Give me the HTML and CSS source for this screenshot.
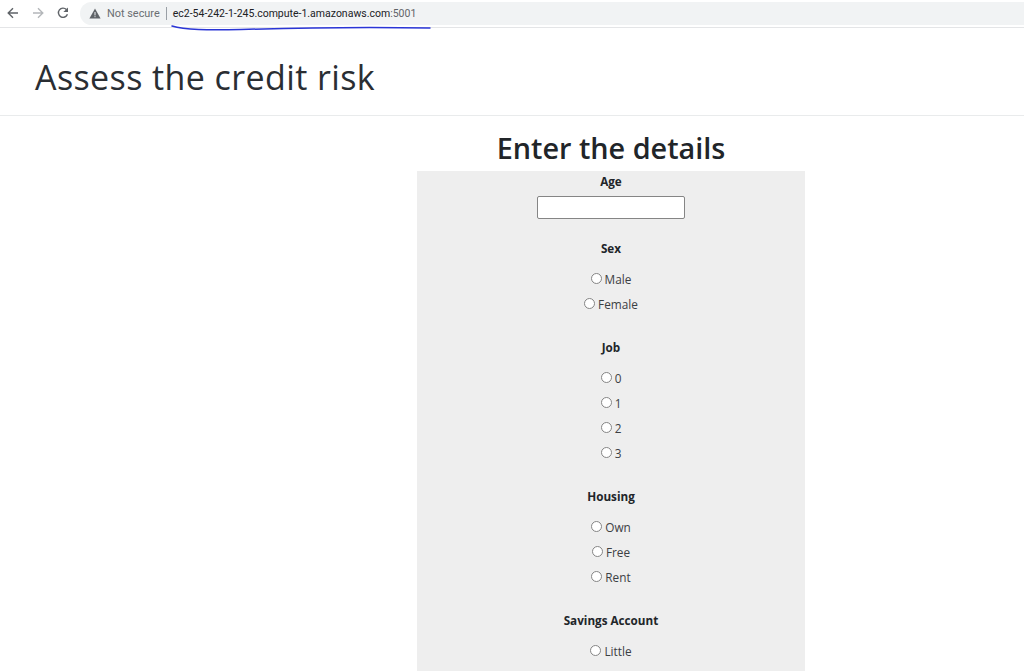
FILE: index.html
```html
<!DOCTYPE html>
<html lang="en">
<head>
<meta charset="utf-8">
<title>Assess the credit risk</title>
<link rel="stylesheet" href="styles.css">
</head>
<body>
<div class="toolbar">
  <svg class="nav" width="14" height="14" viewBox="0 0 14 14"><path d="M12 7H2.5M7 2.2 2.2 7 7 11.8" fill="none" stroke="#5f6368" stroke-width="1.4"/></svg>
  <svg class="nav" width="14" height="14" viewBox="0 0 14 14"><path d="M2 7h9.5M7 2.2 11.8 7 7 11.8" fill="none" stroke="#b4b7ba" stroke-width="1.4"/></svg>
  <svg class="nav" width="14" height="14" viewBox="0 0 14 14"><path d="M11.4 8.2A4.6 4.6 0 1 1 10.4 3.6" fill="none" stroke="#5f6368" stroke-width="1.4"/><path d="M12 1.4V6H7.4z" fill="#5f6368"/></svg>
  <div class="omnibox">
    <svg class="warn" width="12" height="11" viewBox="0 0 12 11"><path d="M6 .6 11.6 10.4H.4z" fill="#5f6368"/><path d="M6 4v3.4M6 8.2v1" stroke="#f1f3f4" stroke-width="1"/></svg>
    <span class="secure">Not secure</span>
    <span class="sep"></span>
    <span class="url">ec2-54-242-1-245.compute-1.amazonaws.com<span class="port">:5001</span></span>
  </div>
</div>
<svg class="scribble" width="270" height="10" viewBox="0 0 270 10"><path d="M1 2C14 6 36 6 70 5.500C120 4 200 3 259 4" fill="none" stroke="#2a35d6" stroke-width="1.500" stroke-linecap="round"/></svg>
<header class="page-head"><h1>Assess the credit risk</h1></header>
<main class="content">
  <h2>Enter the details</h2>
  <form class="panel">
    <label class="field-title first" for="age">Age</label>
    <input class="text-input" id="age" type="text">
    <p class="field-title group-sex">Sex</p>
    <label class="opt"><input type="radio" name="sex">Male</label>
    <label class="opt"><input type="radio" name="sex">Female</label>
    <p class="field-title group">Job</p>
    <label class="opt"><input type="radio" name="job">0</label>
    <label class="opt"><input type="radio" name="job">1</label>
    <label class="opt"><input type="radio" name="job">2</label>
    <label class="opt"><input type="radio" name="job">3</label>
    <p class="field-title group">Housing</p>
    <label class="opt"><input type="radio" name="housing">Own</label>
    <label class="opt"><input type="radio" name="housing">Free</label>
    <label class="opt"><input type="radio" name="housing">Rent</label>
    <p class="field-title group">Savings Account</p>
    <label class="opt"><input type="radio" name="savings">Little</label>
  </form>
</main>
</body>
</html>
```
FILE: styles.css
```css
* { box-sizing: border-box; }
html, body { margin: 0; height: 671px; overflow: hidden; background: #fff; }
body { font-family: "Open Sans", "Noto Sans", sans-serif; color: #212529; position: relative; }

.toolbar { height: 28px; display: flex; align-items: center; padding: 0 0 1px 6px; border-bottom: 1px solid #e4e5e7; }
.nav { margin-right: 11px; flex: none; }
.omnibox { flex: 1; height: 23px; margin-left: -1px; background: #f1f3f4; border-radius: 12px 0 0 12px; display: flex; align-items: center; padding-left: 9px; font-family: "Roboto", sans-serif; font-size: 10.500px; white-space: nowrap; }
.warn { margin-right: 6px; }
.secure { color: #6a6e72; font-size: 10.900px; }
.sep { width: 1px; height: 13px; background: #9aa0a6; margin: 0 6px; }
.url { color: #202124; }
.port { color: #5f6368; }
.scribble { position: absolute; left: 171px; top: 24px; }

.page-head { height: 88px; border-bottom: 1px solid #e9ebec; padding: 22px 0 0 35px; }
h1 { margin: 0; font-size: 34px; font-weight: 400; line-height: 54px; letter-spacing: .4px; color: #2a2e33; }

.content { width: 388px; margin-left: 417px; }
h2 { margin: 0; height: 55px; padding-top: 13px; font-size: 28.800px; line-height: 38px; font-weight: 600; text-align: center; }
.panel { background: #eee; display: flex; flex-direction: column; align-items: center; height: 520px; font-size: 12px; }
.field-title { margin: 0; font-weight: 700; font-size: 11.700px; line-height: 16px; }
.first { margin-top: 2px; }
.text-input { width: 148px; height: 23px; margin-top: 7px; background: #fff; border: 1px solid #858585; border-radius: 2px; }
.group-sex { margin-top: 21px; margin-bottom: 10px; }
.group { margin-top: 23px; margin-bottom: 10px; }
.opt { height: 25px; display: flex; align-items: center; color: #3c4043; font-size: 11.800px; }
.opt input { appearance: none; width: 11px; height: 11px; margin: 0 3px 0 0; background: #fff; border: 1px solid #858585; border-radius: 50%; }
```
